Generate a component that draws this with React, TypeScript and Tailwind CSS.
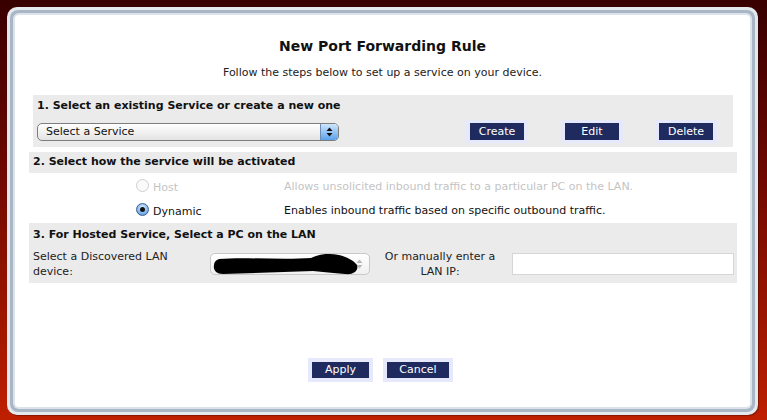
import React, { useState } from "react";

const font = { fontFamily: '"DejaVu Sans", Verdana, sans-serif' };

function NavyButton({ label, width }: { label: string; width: string }) {
  return (
    <div className="bg-[#e6e8fb] px-[4px] py-[3px]">
      <button
        className={`block ${width} h-[17px] bg-[#1f2a5e] text-white text-[11px] leading-[17px] text-center`}
      >
        {label}
      </button>
    </div>
  );
}

function Radio({ checked, disabled }: { checked: boolean; disabled?: boolean }) {
  if (disabled) {
    return (
      <span className="mb-[4px] w-[13px] h-[13px] rounded-full border border-[#cfcfcf] bg-[#fafafa] shrink-0" />
    );
  }
  return (
    <span className="mb-[4px] w-[13px] h-[13px] rounded-full border border-[#3f5f8f] bg-[radial-gradient(circle_at_50%_35%,#e4f2ff,#7fb6ee_60%,#3f82cf)] flex items-center justify-center shrink-0">
      {checked && <span className="w-[5px] h-[5px] rounded-full bg-[#111]" />}
    </span>
  );
}

function StepArrows({ color }: { color: string }) {
  return (
    <svg width="7" height="10" viewBox="0 0 7 10" className="block">
      <polygon points="3.5,0.5 6.5,4 0.5,4" fill={color} />
      <polygon points="0.5,6 6.5,6 3.5,9.5" fill={color} />
    </svg>
  );
}

export default function App() {
  const [mode, setMode] = useState("dynamic");
  const [lanIp, setLanIp] = useState("");

  return (
    <div
      style={font}
      className="w-[767px] h-[420px] bg-linear-to-b from-[#380000] via-[#7a0c00] to-[#bf1f00] pl-[7px] pr-[9px] pt-[7px] pb-[5px]"
    >
      {/* window frame */}
      <div className="h-full rounded-[10px] bg-[#e4e9ee] p-[3px] shadow-[1px_1px_1px_rgba(0,0,0,0.3)]">
        <div className="h-full rounded-[8px] bg-[#a9b6c5] p-[3px]">
          <div className="h-full rounded-[6px] bg-[#dde3ea] p-[2px]">
            <div className="h-full rounded-[4px] bg-white flex flex-col text-[#111]">
              <h1 className="mt-[23px] text-center text-[14px] leading-[16px] font-bold">
                New Port Forwarding Rule
              </h1>
              <p className="mt-[12px] text-center text-[11px] leading-[14px] text-[#222]">
                Follow the steps below to set up a service on your device.
              </p>

              <div className="mt-[15px] ml-[14px] mr-[13px] flex flex-col">
                {/* step 1 */}
                <div className="mx-[4px] bg-[#ebebeb] pl-[4px] pt-[4px] pb-[4px]">
                  <div className="text-[11px] leading-[14px] font-bold">
                    1. Select an existing Service or create a new one
                  </div>
                  <div className="mt-[7px] h-[23px] flex items-center">
                    <div className="w-[302px] h-[18px] rounded-[5px] border border-[#7d7d7d] bg-linear-to-b from-white to-[#e3e3e3] flex items-center overflow-hidden">
                      <span className="flex-1 pl-[8px] text-[11px] leading-[16px] text-[#111]">
                        Select a Service
                      </span>
                      <span className="w-[18px] h-full border-l border-[#6b8db6] bg-linear-to-b from-[#cfe5fc] to-[#5aa2ea] flex items-center justify-center">
                        <StepArrows color="#111" />
                      </span>
                    </div>
                    <div className="ml-[127px]">
                      <NavyButton label="Create" width="w-[54px]" />
                    </div>
                    <div className="ml-[33px]">
                      <NavyButton label="Edit" width="w-[54px]" />
                    </div>
                    <div className="ml-[32px]">
                      <NavyButton label="Delete" width="w-[54px]" />
                    </div>
                  </div>
                </div>

                {/* step 2 */}
                <div className="mt-[5px] h-[21px] bg-[#ebebeb] pl-[4px] flex items-center text-[11px] font-bold">
                  2. Select how the service will be activated
                </div>
                <div className="flex flex-col pt-[2px]">
                  <div className="h-[24px] flex items-center pl-[107px] text-[11px] leading-[14px]">
                    <div className="w-[148px] flex items-center">
                      <Radio checked={mode === "host"} disabled />
                      <span className="ml-[4px] mt-[2px] text-[#c4c4c4]">Host</span>
                    </div>
                    <span className="text-[#c4c4c4]">
                      Allows unsolicited inbound traffic to a particular PC on the LAN.
                    </span>
                  </div>
                  <div className="h-[24px] flex items-center pl-[107px] text-[11px] leading-[14px]">
                    <div
                      className="w-[148px] flex items-center cursor-pointer"
                      onClick={() => setMode("dynamic")}
                    >
                      <Radio checked={mode === "dynamic"} />
                      <span className="ml-[4px] mt-[2px] text-[#111]">Dynamic</span>
                    </div>
                    <span className="text-[#111]">
                      Enables inbound traffic based on specific outbound traffic.
                    </span>
                  </div>
                </div>

                {/* step 3 */}
                <div className="bg-[#ebebeb] pl-[4px] pt-[5px] pb-[4px]">
                  <div className="text-[11px] leading-[14px] font-bold">
                    3. For Hosted Service, Select a PC on the LAN
                  </div>
                  <div className="mt-[7px] h-[30px] flex items-center text-[11px] leading-[15px] text-[#222]">
                    <div className="w-[177px]">
                      Select a Discovered LAN
                      <br />
                      device:
                    </div>
                    <div className="relative w-[160px] h-[22px] rounded-[5px] border border-[#c9c9c9] bg-linear-to-b from-white to-[#f0f0f0] flex items-center justify-end pr-[6px]">
                      <StepArrows color="#b8b8b8" />
                      {/* redacted device name */}
                      <svg
                        className="absolute left-[2px] top-[0px]"
                        width="146"
                        height="22"
                        viewBox="0 0 146 22"
                      >
                        <path
                          d="M6 5 C 30 3, 70 6, 98 4 C 106 0, 116 -1, 126 1 C 134 3, 140 6, 144 11 C 146 17, 140 21, 132 20 C 120 19, 110 18, 100 17 C 70 18, 40 19, 10 20 C 3 20, 0 16, 1 11 C 1 8, 3 6, 6 5 Z"
                          fill="#000"
                        />
                      </svg>
                    </div>
                    <div className="w-[130px] ml-[5px] text-center">
                      Or manually enter a
                      <br />
                      LAN IP:
                    </div>
                    <input
                      value={lanIp}
                      onChange={(e) => setLanIp(e.target.value)}
                      className="ml-[7px] w-[222px] h-[22px] bg-white border border-[#d6d6d6] outline-none text-[11px] px-[3px]"
                    />
                  </div>
                </div>
              </div>

              {/* footer actions */}
              <div className="mt-[75px] flex justify-center gap-[10px] pr-[4px]">
                <div className="bg-[#e6e8fb] p-[4px]">
                  <button className="block w-[57px] h-[16px] bg-[#1f2a5e] text-white text-[11px] leading-[16px]">
                    Apply
                  </button>
                </div>
                <div className="bg-[#e6e8fb] p-[4px]">
                  <button className="block w-[62px] h-[16px] bg-[#1f2a5e] text-white text-[11px] leading-[16px]">
                    Cancel
                  </button>
                </div>
              </div>
            </div>
          </div>
        </div>
      </div>
    </div>
  );
}
